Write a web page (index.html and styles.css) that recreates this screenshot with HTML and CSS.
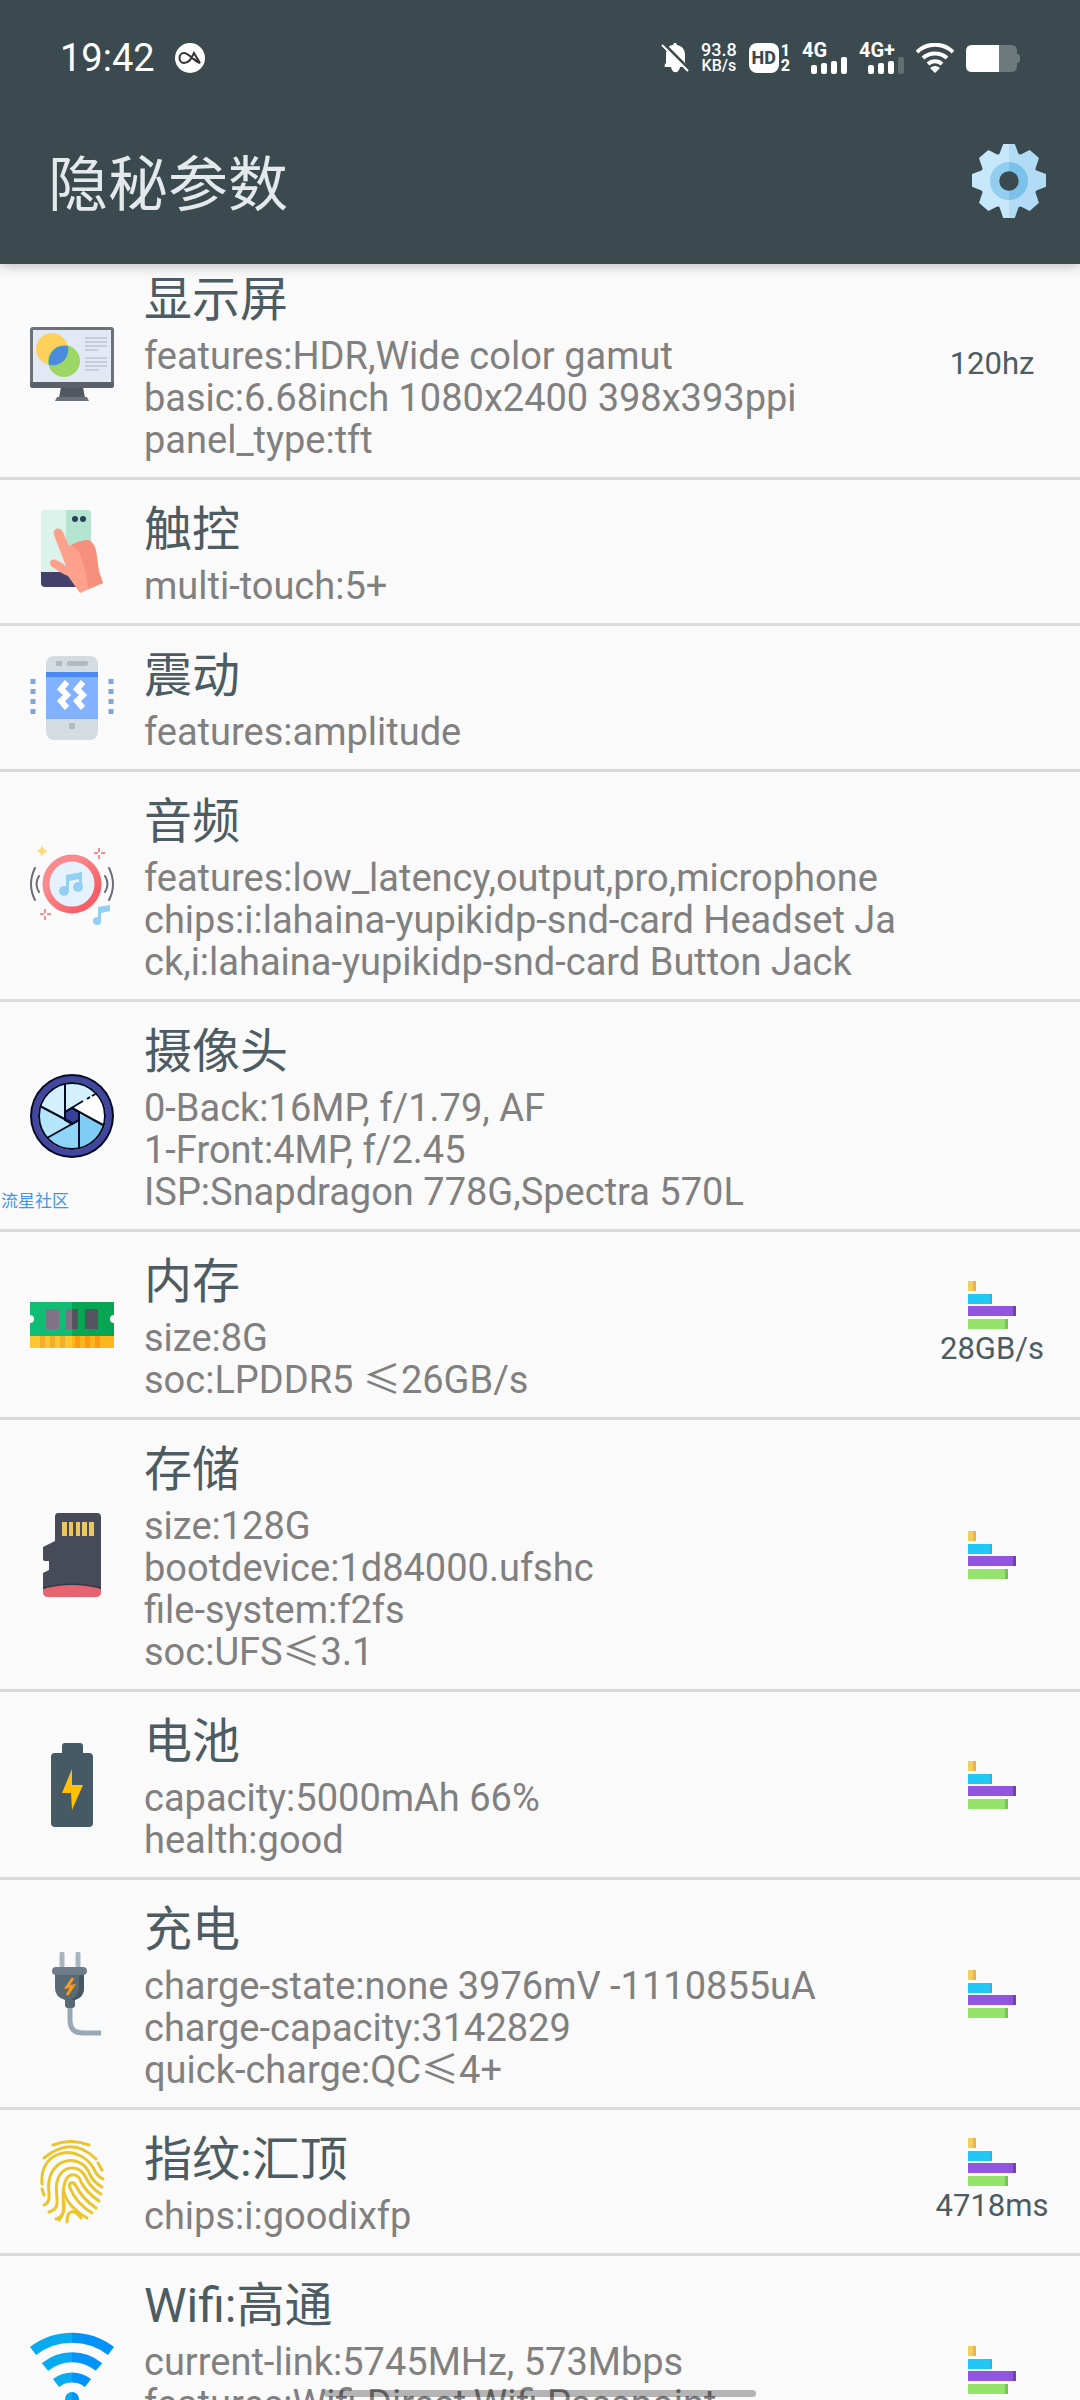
FILE: index.html
```html
<!DOCTYPE html>
<html lang="zh-CN">

<head>
    <meta charset="UTF-8">
    <meta name="viewport" content="width=device-width, initial-scale=1.0">
    <title>隐秘参数</title>
    <link rel="stylesheet" href="styles.css">
</head>

<body>
    <!-- 公用图形 -->
    <svg class="defs" width="0" height="0" aria-hidden="true">
        <symbol id="chart" viewBox="0 0 48 48">
            <path fill="#f0d05c" d="M0 0h5v10H0z" /><path fill="#f0b04c" d="M5 0h3v10H5z" />
            <path fill="#20c8f6" d="M0 13h22v10H0z" /><path fill="#30b0e4" d="M22 13h2v10h-2z" />
            <path fill="#9155e0" d="M0 25h45v10H0z" /><path fill="#7440b4" d="M45 25h3v10h-3z" />
            <path fill="#95e36c" d="M0 38h37v10H0z" /><path fill="#74c456" d="M37 38h3v10h-3z" />
        </symbol>
    </svg>

    <header>
        <div class="status">
            <span class="time">19:42</span>
            <svg class="badge" viewBox="0 0 30 30">
                <circle cx="15" cy="15" r="15" fill="#fff" />
                <path fill="none" stroke="#333" stroke-width="2" d="M25 20C18 18 14 10 9 10c-6 0-6 10 0 10 5 0 7-4 10-10l6 10-6-4" />
            </svg>
            <div class="signs">
                <svg width="28" height="30" viewBox="0 0 28 30">
                    <path fill="#fff" d="M5 24C3 24 3 22 5 20V11C5 5 9 2 12 2c1-3 3-3 4 0 5 1 8 4 8 10v8c2 2 2 4 0 4h-5c-1 7-8 7-9 0z" />
                    <path stroke="#3b4a4f" stroke-width="3" d="M2 0l26 26" />
                    <path stroke="#fff" stroke-width="2" d="M1 2l26 26" />
                </svg>
                <div class="speed"><span>93.8</span><span class="unit">KB/s</span></div>
                <div class="hd">
                    <span class="hd-box">HD</span>
                    <span class="hd-num"><span>1</span><span>2</span></span>
                </div>
                <div class="net">
                    <span>4G</span>
                    <svg width="36" height="17" viewBox="0 0 36 17" fill="#fff">
                        <rect x="0" y="8" width="6" height="9" rx="2" /><rect x="10" y="6" width="6" height="11" rx="2" />
                        <rect x="20" y="4" width="6" height="13" rx="2" /><rect x="30" y="0" width="6" height="17" rx="2" />
                    </svg>
                </div>
                <div class="net">
                    <span>4G+</span>
                    <svg width="36" height="17" viewBox="0 0 36 17" fill="#fff">
                        <rect x="0" y="8" width="6" height="9" rx="2" /><rect x="10" y="6" width="6" height="11" rx="2" />
                        <rect x="20" y="4" width="6" height="13" rx="2" /><rect x="30" y="0" width="6" height="17" rx="2" opacity=".2" />
                    </svg>
                </div>
                <svg width="38" height="30" viewBox="0 0 38 30" fill="none" stroke="#fff" stroke-width="4">
                    <path d="M1 9a26 26 0 0 1 36 0M7 15a18 18 0 0 1 24 0M12 21a10 10 0 0 1 14 0" />
                    <path fill="#fff" stroke="none" d="M14 25q5-4 10 0l-5 5z" />
                </svg>
                <svg width="54" height="27" viewBox="0 0 54 27">
                    <path fill="#6e797d" d="M32 0h13q6 0 6 6v3q3 0 3 3v3q0 3-3 3v3q0 6-6 6H32z" />
                    <path fill="#fff" d="M6 0h27v27H6q-6 0-6-6V6q0-6 6-6z" />
                </svg>
            </div>
        </div>
        <div class="bar">
            <h1>隐秘参数</h1>
            <button class="setting" aria-label="设置">
                <svg viewBox="0 0 72 72">
                    <defs>
                        <linearGradient id="gear" gradientUnits="userSpaceOnUse" x1="0" y1="0" x2="72" y2="0">
                            <stop offset=".5" stop-color="#c6e8fa" /><stop offset=".5" stop-color="#b2dcf6" />
                        </linearGradient>
                        <linearGradient id="hub" gradientUnits="userSpaceOnUse" x1="0" y1="0" x2="72" y2="0">
                            <stop offset=".5" stop-color="#92cef0" /><stop offset=".5" stop-color="#7cc1ea" />
                        </linearGradient>
                    </defs>
                    <path fill="url(#gear)" stroke="url(#gear)" stroke-width="2" stroke-linejoin="round" d="M31 1h10l3 8q1 3 4 2l8-4 8 7-3 9q-1 3 2 4l8 3v11l-8 3q-3 1-2 4l3 9-8 7-8-4q-3-1-4 2l-3 9H31l-3-9q-1-3-4-2l-8 4-8-7 3-9q1-3-2-4l-8-3V30l8-3q3-1 2-4l-3-9 8-7 8 4q3 1 4-2z" />
                    <circle cx="36" cy="36" r="14" fill="#3b4a4f" stroke="url(#hub)" stroke-width="9" />
                </svg>
            </button>
        </div>
    </header>

    <main>
        <section class="row">
            <svg class="icon" viewBox="0 0 84 84">
                <path fill="#505860" d="M31 65h22l2 11H29z" />
                <path fill="#6c7178" d="M27 75h30l2 4H25z" />
                <rect y="5" width="84" height="61" rx="3" fill="#6c7178" />
                <path fill="#5a5f68" d="M0 60h84v3q0 3-3 3H3q-3 0-3-3z" />
                <path fill="#e3e9f4" d="M3 8h78v52H3z" />
                <circle cx="22" cy="27" r="16" fill="#ffd15c" />
                <circle cx="34" cy="39" r="16" fill="#9cd765" />
                <path fill="#4a8be0" d="M38 24a16 16 0 0 1-19 19 16 16 0 0 1 19-19z" />
                <path stroke="#c6ccd8" stroke-width="2" d="M55 16h22M55 20h22M55 24h22M55 28h13M55 36h22M55 40h22M55 44h22M55 48h14" />
            </svg>
            <div class="info">
                <h2>显示屏</h2>
                <p>features:HDR,Wide color gamut</p>
                <p>basic:6.68inch 1080x2400 398x393ppi</p>
                <p>panel_type:tft</p>
            </div>
            <div class="side"><span>120hz</span></div>
        </section>

        <section class="row">
            <svg class="icon" viewBox="0 0 84 84">
                <rect x="11" width="50" height="77" rx="4" fill="#dbf3ea" />
                <path fill="#b5e5d1" d="M36 0h21q4 0 4 4v58H36z" />
                <path fill="#43406b" d="M11 62h50v11q0 4-4 4H15q-4 0-4-4z" />
                <ellipse cx="45" cy="9" rx="3" ry="3" fill="#29405c" /><ellipse cx="53" cy="9" rx="3" ry="3" fill="#29405c" />
                <path fill="#fda18c" d="M24 25c-2-7 6-9 9-3l6 14c6-4 13-6 19-6 5 2 7 6 8 11l3 21 4 11-23 10-12-17c-6-2-12-7-17-10-3-6 2-8 7-5 3 1 5 3 8 5z" />
                <path fill="#f6907c" d="M42 35c5-3 11-5 16-5 5 2 7 6 8 11l3 21 4 11-15 6C57 64 53 52 49 42z" />
            </svg>
            <div class="info">
                <h2>触控</h2>
                <p>multi-touch:5+</p>
            </div>
            <div class="side"></div>
        </section>

        <section class="row">
            <svg class="icon" viewBox="0 0 84 84">
                <rect x="16" width="52" height="84" rx="8" fill="#d5dce1" />
                <path fill="#82b1ff" d="M16 16h52v47H16z" /><path fill="#4a88f4" d="M16 16h52v5H16z" />
                <path fill="#b0bac0" d="M26 5h6v5h-6zM39 67h6v6h-6z" /><rect x="37" y="5" width="21" height="5" rx="2" fill="#b0bac0" />
                <path fill="none" stroke="#fff" stroke-width="6" d="M37 26l-6 7 6 6-6 6 6 7M53 26l-6 7 6 6-6 6 6 7" />
                <path stroke="#7fa6dd" stroke-width="5" stroke-dasharray="5" d="M3 23v36M81 23v36" />
            </svg>
            <div class="info">
                <h2>震动</h2>
                <p>features:amplitude</p>
            </div>
            <div class="side"></div>
        </section>

        <section class="row">
            <svg class="icon" viewBox="0 0 84 84">
                <defs>
                    <linearGradient id="ring" x1="0" x2="1" y1="0" y2="1">
                        <stop offset=".3" stop-color="#f98a8e" /><stop offset=".8" stop-color="#f75f68" />
                    </linearGradient>
                </defs>
                <circle cx="42" cy="40" r="26" fill="#e6f1fe" stroke="url(#ring)" stroke-width="7" />
                <g fill="#93cff2">
                    <path d="M36 31l16-3v17h-3V35l-10 2v11h-3z" />
                    <circle cx="34" cy="47" r="5" /><circle cx="48" cy="43" r="5" />
                    <path d="M68 63l12-2v6l-9 2v8h-3z" /><circle cx="67" cy="77" r="4" />
                </g>
                <path fill="none" stroke="#686d78" stroke-width="2" stroke-linecap="round" d="M5 24q-8 16 0 32M9 32q-5 8 0 16M79 24q8 16 0 32M75 32q5 8 0 16" />
                <path fill="#fddb78" d="M12 1q1 5 6 6-5 1-6 6-1-5-6-6 5-1 6-6z" />
                <path stroke="#f98a8e" stroke-width="2" d="M69 4v4M69 11v4M64 9h4M71 9h4M15 65v4M15 72v4M10 70h4M17 70h4" />
            </svg>
            <div class="info">
                <h2>音频</h2>
                <p>features:low_latency,output,pro,microphone</p>
                <p>chips:i:lahaina-yupikidp-snd-card Headset Jack,i:lahaina-yupikidp-snd-card Button Jack</p>
            </div>
            <div class="side"></div>
        </section>

        <section class="row">
            <svg class="icon" viewBox="0 0 84 84">
                <circle cx="42" cy="42" r="42" fill="#050b22" />
                <circle cx="42" cy="42" r="37" fill="#d3f0fc" stroke="#41469e" stroke-width="6" />
                <path fill="#fff" d="M35 38l32-19q7 8 7 23v9z" />
                <path fill="#7fcdf5" d="M49 40l24 11q-6 19-24 23z" />
                <path fill="#8fd5f7" d="M49 46v28q-20 4-32-10z" />
                <path fill="#b5e5f9" d="M10 32l32 16-25 16Q7 50 10 32z" />
                <circle cx="42" cy="42" r="33" fill="none" stroke="#050b22" stroke-width="2" />
                <path fill="#37409a" stroke="#050b22" stroke-width="2" d="M42 34l7 4v8l-7 4-7-4v-8z" />
                <path stroke="#050b22" stroke-width="2" d="M35 9v33M35 38l18-11M57 25l3-2M62 22l5-3M42 34l31 17M49 74V38M17 64l32-18M10 32l32 17" />
            </svg>
            <div class="info">
                <h2>摄像头</h2>
                <p>0-Back:16MP, f/1.79, AF</p>
                <p>1-Front:4MP, f/2.45</p>
                <p>ISP:Snapdragon 778G,Spectra 570L</p>
            </div>
            <div class="side"></div>
            <span class="mark">流星社区</span>
        </section>

        <section class="row">
            <svg class="icon" viewBox="0 0 84 84">
                <path fill="#10bd75" d="M0 19h42v35H0z" /><path fill="#08a552" d="M42 19h42v35H42z" />
                <path fill="#ffc72e" d="M0 53h42v12H0z" /><path fill="#ffb61c" d="M42 53h42v12H42z" />
                <path fill="#7f7385" d="M16 26h13v20H16zM36 26h6v20h-6z" /><path fill="#58545f" d="M42 26h6v20h-6zM55 26h13v20H55z" />
                <path fill="#f5ad2c" d="M10 53h5v12h-5zM20 53h5v12h-5zM30 53h5v12h-5z" /><path fill="#ff9a10" d="M45 53h5v12h-5zM55 53h5v12h-5zM65 53h5v12h-5z" />
                <path fill="#fafafa" d="M0 32a4 4 0 0 1 0 8zM84 32a4 4 0 0 0 0 8z" />
            </svg>
            <div class="info">
                <h2>内存</h2>
                <p>size:8G</p>
                <p>soc:LPDDR5 <span class="le">≤</span>26GB/s</p>
            </div>
            <div class="side"><svg class="chart"><use href="#chart" /></svg><span>28GB/s</span></div>
        </section>

        <section class="row">
            <svg class="icon" viewBox="0 0 84 84">
                <path fill="#464a59" d="M28 0h39q4 0 4 4v74H13V60l6-3v-9h-4q-2 0-2-2V34l12-6V4q0-4 3-4z" />
                <path fill="#343846" d="M13 74q29-7 58 0v4H13z" />
                <path fill="#e5646f" d="M13 76q29-8 58 0v3q0 5-5 5H18q-5 0-5-5z" />
                <path fill="#ecc760" d="M32 9h5v14h-5zM39 9h4v14h-4zM46 9h4v14h-4zM52 9h5v14h-5zM59 9h5v14h-5z" />
            </svg>
            <div class="info">
                <h2>存储</h2>
                <p>size:128G</p>
                <p>bootdevice:1d84000.ufshc</p>
                <p>file-system:f2fs</p>
                <p>soc:UFS<span class="le">≤</span>3.1</p>
            </div>
            <div class="side"><svg class="chart"><use href="#chart" /></svg></div>
        </section>

        <section class="row">
            <svg class="icon" viewBox="0 0 84 84">
                <path fill="#455a64" d="M35 0h15q3 0 3 3v7h6q4 0 4 4v66q0 4-4 4H25q-4 0-4-4V14q0-4 4-4h7V3q0-3 3-3z" />
                <path fill="#ffc107" d="M42 26L32 50h9l1 17 11-25H42z" />
            </svg>
            <div class="info">
                <h2>电池</h2>
                <p>capacity:5000mAh 66%</p>
                <p>health:good</p>
            </div>
            <div class="side"><svg class="chart"><use href="#chart" /></svg></div>
        </section>

        <section class="row">
            <svg class="icon" viewBox="0 0 84 84">
                <path stroke="#a9b6c2" stroke-width="5" stroke-linecap="round" d="M32 2v14M48 2v14" />
                <path fill="none" stroke="#98a8b5" stroke-width="5" d="M40 52v16q0 13 13 13h18" />
                <path fill="#586a75" d="M25 22h29v14q0 9-9 12v5q0 3-3 3h-4q-3 0-3-3v-5q-10-3-10-12z" />
                <path fill="#475761" d="M49 22h5v14q0 9-9 12h-4q8-5 8-12z" />
                <rect x="22" y="15" width="35" height="8" rx="4" fill="#6d7e8a" />
                <path fill="none" stroke="#f8981c" stroke-width="3" d="M43 26l-6 9 6-1-6 9" />
            </svg>
            <div class="info">
                <h2>充电</h2>
                <p>charge-state:none 3976mV -1110855uA</p>
                <p>charge-capacity:3142829</p>
                <p>quick-charge:QC<span class="le">≤</span>4+</p>
            </div>
            <div class="side"><svg class="chart"><use href="#chart" /></svg></div>
        </section>

        <section class="row">
            <svg class="icon" viewBox="0 0 84 84" fill="none" stroke="#e9c52e" stroke-width="3" stroke-linecap="round">
                <path d="M23 5q18-7 36 0M14 18q28-23 52 1M68 23l4 7" />
                <path d="M12 44c-3-36 39-42 53-13q3 6 8 8M12 49l2 6" />
                <path d="M14 65c9-4 3-13 5-24 4-25 34-27 41-6 3 6 7 9 12 12" />
                <path d="M19 72c14-4 5-16 8-30 4-18 24-18 29-4 4 8 8 12 15 16" />
                <path d="M26 79c14-5 3-18 9-37 4-11 14-8 16 0 4 8 9 13 18 19" />
                <path d="M34 62c1 6 0 12-5 18" />
                <path d="M66 68C57 62 51 56 46 46c-3-6-8-3-6 2 4 10 11 18 22 25" />
                <path d="M34 52c2 10 12 20 23 26M37 82c0-13 8-13 14-4" />
            </svg>
            <div class="info">
                <h2>指纹:汇顶</h2>
                <p>chips:i:goodixfp</p>
            </div>
            <div class="side"><svg class="chart"><use href="#chart" /></svg><span>4718ms</span></div>
        </section>

        <section class="row row-last">
            <svg class="icon" viewBox="0 0 84 84">
                <defs>
                    <linearGradient id="wifi" gradientUnits="userSpaceOnUse" x1="0" y1="0" x2="84" y2="0">
                        <stop offset=".5" stop-color="#08abf0" /><stop offset=".5" stop-color="#0094fb" />
                    </linearGradient>
                </defs>
                <path fill="none" stroke="url(#wifi)" stroke-width="10" d="M3 23a64 64 0 0 1 78 0M15 39a42 42 0 0 1 54 0M26 55a26 26 0 0 1 32 0" />
                <circle cx="42" cy="71" r="7" fill="url(#wifi)" />
            </svg>
            <div class="info">
                <h2>Wifi:高通</h2>
                <p>current-link:5745MHz, 573Mbps</p>
                <p>features:Wifi-Direct,Wifi Passpoint</p>
            </div>
            <div class="side"><svg class="chart"><use href="#chart" /></svg></div>
        </section>
    </main>

    <div class="home-line"></div>
</body>

</html>
```
FILE: styles.css
```css
* {
    margin: 0;
    padding: 0;
    box-sizing: border-box;
}

body {
    height: 100vh;
    overflow: hidden;
    display: flex;
    flex-direction: column;
    background-color: #fafafa;
    font-family: Roboto, "Noto Sans CJK SC", sans-serif;
}

.defs {
    position: absolute;
}

/* 顶部 */
header {
    flex: none;
    position: relative;
    z-index: 1;
    padding: 34px 34px 40px 48px;
    background-color: #3b4a4f;
    color: #fff;
    box-shadow: 0 2px 12px rgba(0, 0, 0, 0.25);
}

.status {
    display: flex;
    align-items: center;
    height: 48px;
    padding: 0 26px 0 12px;
}

.time {
    font-size: 38px;
}

.badge {
    width: 30px;
    height: 30px;
    margin-left: 20px;
}

.signs {
    display: flex;
    align-items: center;
    gap: 12px;
    margin-left: auto;
}

.speed {
    display: flex;
    flex-direction: column;
    align-items: center;
    font-size: 18px;
    font-weight: 500;
    line-height: 16px;
}

.speed .unit {
    font-size: 16px;
}

.hd {
    display: flex;
    gap: 2px;
    font-weight: 800;
}

.hd-box {
    width: 30px;
    height: 30px;
    border-radius: 8px;
    background-color: #fff;
    color: #3b4a4f;
    font-size: 18px;
    line-height: 30px;
    text-align: center;
}

.hd-num {
    display: flex;
    flex-direction: column;
    font-size: 16px;
    line-height: 15px;
}

.net {
    display: flex;
    flex-direction: column;
    align-items: flex-end;
    width: 45px;
    height: 32px;
}

.net span {
    align-self: flex-start;
    height: 15px;
    font-size: 20px;
    font-weight: bold;
    line-height: 16px;
}

.bar {
    display: flex;
    justify-content: space-between;
    align-items: flex-start;
    padding-top: 62px;
}

h1 {
    padding-top: 4px;
    color: #e4e9eb;
    font-size: 60px;
    font-weight: 400;
    line-height: 76px;
}

.setting {
    width: 74px;
    height: 74px;
    border: none;
    background: none;
}

/* 列表 */
main {
    flex: 1;
    min-height: 0;
    margin-top: -14px;
}

.row {
    position: relative;
    display: flex;
    align-items: center;
    padding: 16px 0 16px 30px;
    border-bottom: 3px solid #dadada;
}

.row-last {
    min-height: 230px;
}

.icon {
    flex: none;
    width: 84px;
    height: 84px;
}

.info {
    flex: 1;
    align-self: flex-start;
    min-width: 0;
    padding: 4px 0 0 30px;
}

h2 {
    margin-bottom: 5px;
    color: #4c5c62;
    font-size: 48px;
    font-weight: 400;
    line-height: 60px;
}

.info p {
    color: #808080;
    font-size: 38px;
    line-height: 42px;
    word-break: break-all;
}

.le {
    font-family: "Noto Sans CJK SC", sans-serif;
    line-height: 0;
}

.side {
    flex: none;
    display: flex;
    flex-direction: column;
    align-items: center;
    width: 176px;
    color: #4c5c62;
    font-size: 31px;
    line-height: 40px;
}

.chart {
    width: 48px;
    height: 48px;
}

.mark {
    position: absolute;
    left: 1px;
    bottom: 16px;
    color: #3f97ea;
    font-size: 17px;
    line-height: 24px;
}

/* 底部手势条 */
.home-line {
    position: fixed;
    left: 30%;
    bottom: 3px;
    width: 40%;
    height: 7px;
    border-radius: 4px;
    background-color: rgba(0, 0, 0, 0.28);
}
```
